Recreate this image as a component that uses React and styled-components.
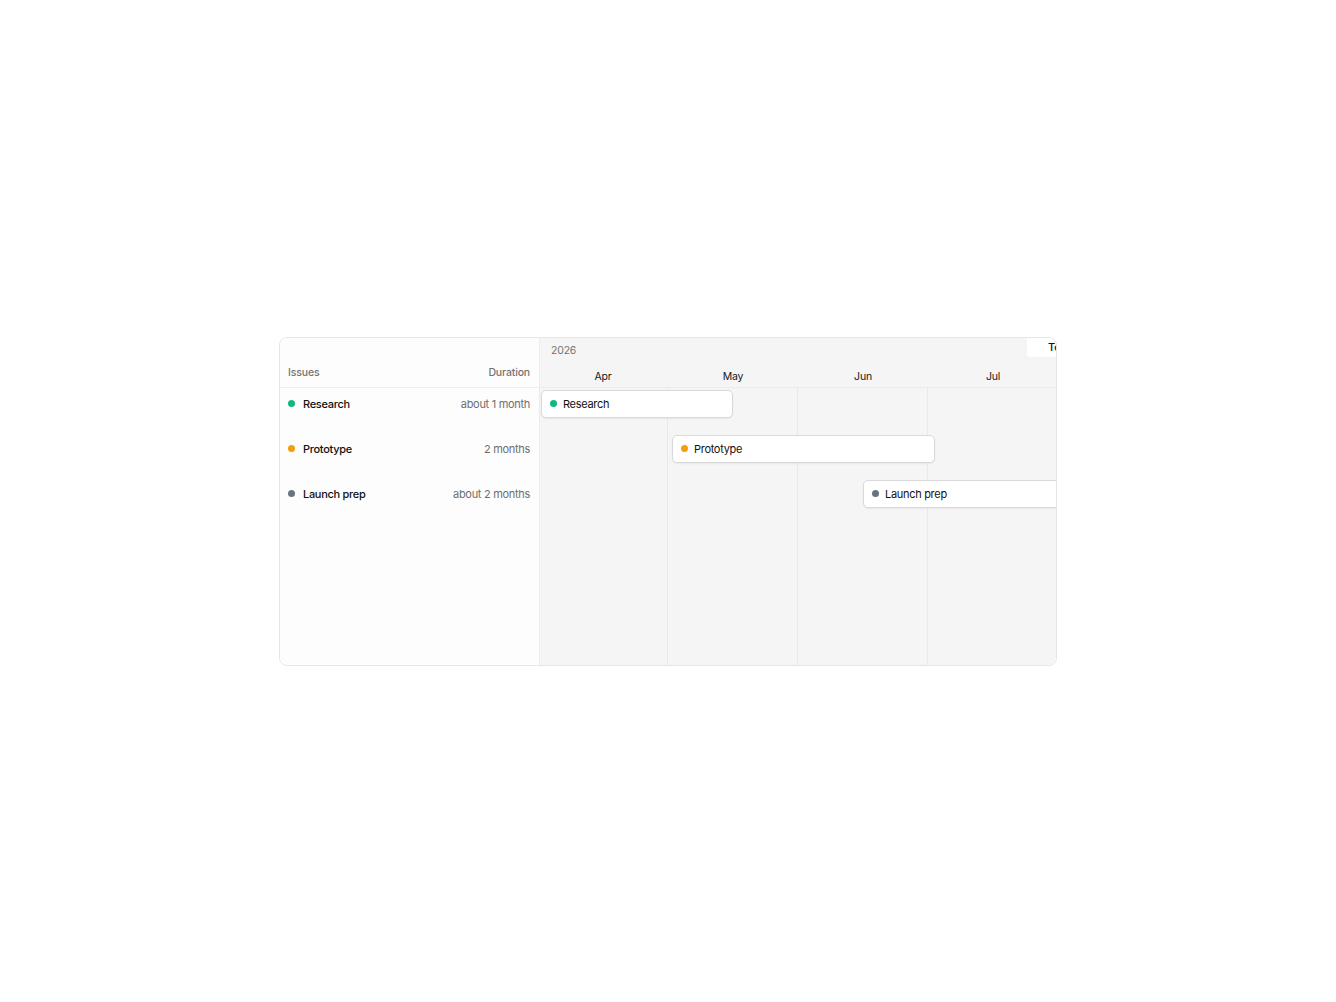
import React from 'react';
import styled, { createGlobalStyle } from 'styled-components';

const GlobalStyle = createGlobalStyle`
  * { box-sizing: border-box; }
  body {
    margin: 0;
    background: #ffffff;
    font-family: Inter, "Liberation Sans", sans-serif;
    color: #171717;
    -webkit-font-smoothing: antialiased;
  }
`;

// every month gets the same column width; the grid starts a little before the visible edge
const MONTH_WIDTH = 130;
const GRID_OFFSET = -2;
const MONTHS = ['Apr', 'May', 'Jun', 'Jul'];

const ISSUES = [
  { id: 1, name: 'Research', duration: 'about 1 month', color: '#10b981', left: 3, width: 192 },
  { id: 2, name: 'Prototype', duration: '2 months', color: '#f59e0b', left: 134, width: 263 },
  { id: 3, name: 'Launch prep', duration: 'about 2 months', color: '#6b7280', left: 325, width: 262 },
];

const ROW_HEIGHT = 30;
const ROW_GAP = 15;

const Page = styled.div`
  min-height: 100vh;
  display: flex;
  align-items: center;
  justify-content: center;
`;

const Board = styled.div`
  width: 778px;
  height: 329px;
  display: flex;
  border: 1px solid #e6e6e6;
  border-radius: 8px;
  overflow: hidden;
  background: #fdfdfd;
`;

const Sidebar = styled.div`
  width: 260px;
  flex-shrink: 0;
  display: flex;
  flex-direction: column;
  border-right: 1px solid #ececec;
  background: #fdfdfd;
`;

const SidebarHeader = styled.div`
  height: 50px;
  display: flex;
  align-items: flex-end;
  justify-content: space-between;
  padding: 0 9px 8px 8px;
  border-bottom: 1px solid #efefef;
  font-size: 10.5px;
  font-weight: 500;
  letter-spacing: -0.15px;
  color: #737373;
`;

const RowList = styled.div`
  display: flex;
  flex-direction: column;
  gap: ${ROW_GAP}px;
  padding-top: 1px;
`;

const IssueRow = styled.div`
  height: ${ROW_HEIGHT}px;
  display: flex;
  align-items: center;
  padding: 0 9px 0 8px;
`;

const Dot = styled.span`
  width: 7px;
  height: 7px;
  border-radius: 50%;
  flex-shrink: 0;
  background: ${(p) => p.$color};
`;

const IssueName = styled.span`
  margin-left: 8px;
  font-size: 11px;
  font-weight: 500;
  letter-spacing: -0.3px;
  color: #111111;
`;

const Duration = styled.span`
  margin-left: auto;
  font-size: 11px;
  letter-spacing: -0.3px;
  color: #6f6f6f;
`;

const Timeline = styled.div`
  flex: 1;
  position: relative;
  display: flex;
  flex-direction: column;
  background: #f5f5f5;
  overflow: hidden;
`;

const TimelineHeader = styled.div`
  height: 50px;
  flex-shrink: 0;
  display: flex;
  flex-direction: column;
  border-bottom: 1px solid #ececec;
`;

const Year = styled.div`
  height: 26px;
  padding: 6px 0 0 11px;
  font-size: 10.5px;
  letter-spacing: -0.2px;
  color: #737373;
`;

const MonthRow = styled.div`
  display: flex;
  flex: 1;
  margin-left: ${GRID_OFFSET}px;
`;

const MonthLabel = styled.div`
  flex-shrink: 0;
  width: ${MONTH_WIDTH}px;
  display: flex;
  align-items: center;
  justify-content: center;
  padding-top: 2px;
  font-size: 10.5px;
  letter-spacing: -0.2px;
  color: #171717;
`;

const Body = styled.div`
  flex: 1;
  position: relative;
  display: flex;
  margin-left: ${GRID_OFFSET}px;
`;

const MonthColumn = styled.div`
  flex-shrink: 0;
  width: ${MONTH_WIDTH}px;
  border-right: 1px solid #e9e9e9;
`;

const Bar = styled.div`
  position: absolute;
  height: 28px;
  display: flex;
  align-items: center;
  padding: 0 8px;
  background: #ffffff;
  border: 1px solid #d9d9d9;
  border-radius: 5px;
  box-shadow: 0 1px 2px rgba(0, 0, 0, 0.06);
  font-size: 11px;
  letter-spacing: -0.3px;
  color: #111111;
  white-space: nowrap;
`;

const BarLabel = styled.span`
  margin-left: 6px;
`;

const TodayBadge = styled.div`
  position: absolute;
  top: 0;
  left: 487px;
  height: 19px;
  padding: 0 8px 0 21px;
  display: flex;
  align-items: center;
  background: #ffffff;
  border-radius: 0 0 0 4px;
  font-size: 11px;
  font-weight: 500;
  color: #111111;
`;

export default function App() {
  return (
    <>
      <GlobalStyle />
      <Page>
        <Board>
          <Sidebar>
            <SidebarHeader>
              <span>Issues</span>
              <span>Duration</span>
            </SidebarHeader>
            <RowList>
              {ISSUES.map((issue) => (
                <IssueRow key={issue.id}>
                  <Dot $color={issue.color} />
                  <IssueName>{issue.name}</IssueName>
                  <Duration>{issue.duration}</Duration>
                </IssueRow>
              ))}
            </RowList>
          </Sidebar>

          <Timeline>
            <TimelineHeader>
              <Year>2026</Year>
              <MonthRow>
                {MONTHS.map((m) => (
                  <MonthLabel key={m}>{m}</MonthLabel>
                ))}
              </MonthRow>
            </TimelineHeader>
            <Body>
              {MONTHS.map((m) => (
                <MonthColumn key={m} />
              ))}
              {ISSUES.map((issue, i) => (
                <Bar
                  key={issue.id}
                  style={{
                    left: issue.left,
                    width: issue.width,
                    top: i * (ROW_HEIGHT + ROW_GAP) + 2,
                  }}
                >
                  <Dot $color={issue.color} />
                  <BarLabel>{issue.name}</BarLabel>
                </Bar>
              ))}
            </Body>
            <TodayBadge>Today</TodayBadge>
          </Timeline>
        </Board>
      </Page>
    </>
  );
}
